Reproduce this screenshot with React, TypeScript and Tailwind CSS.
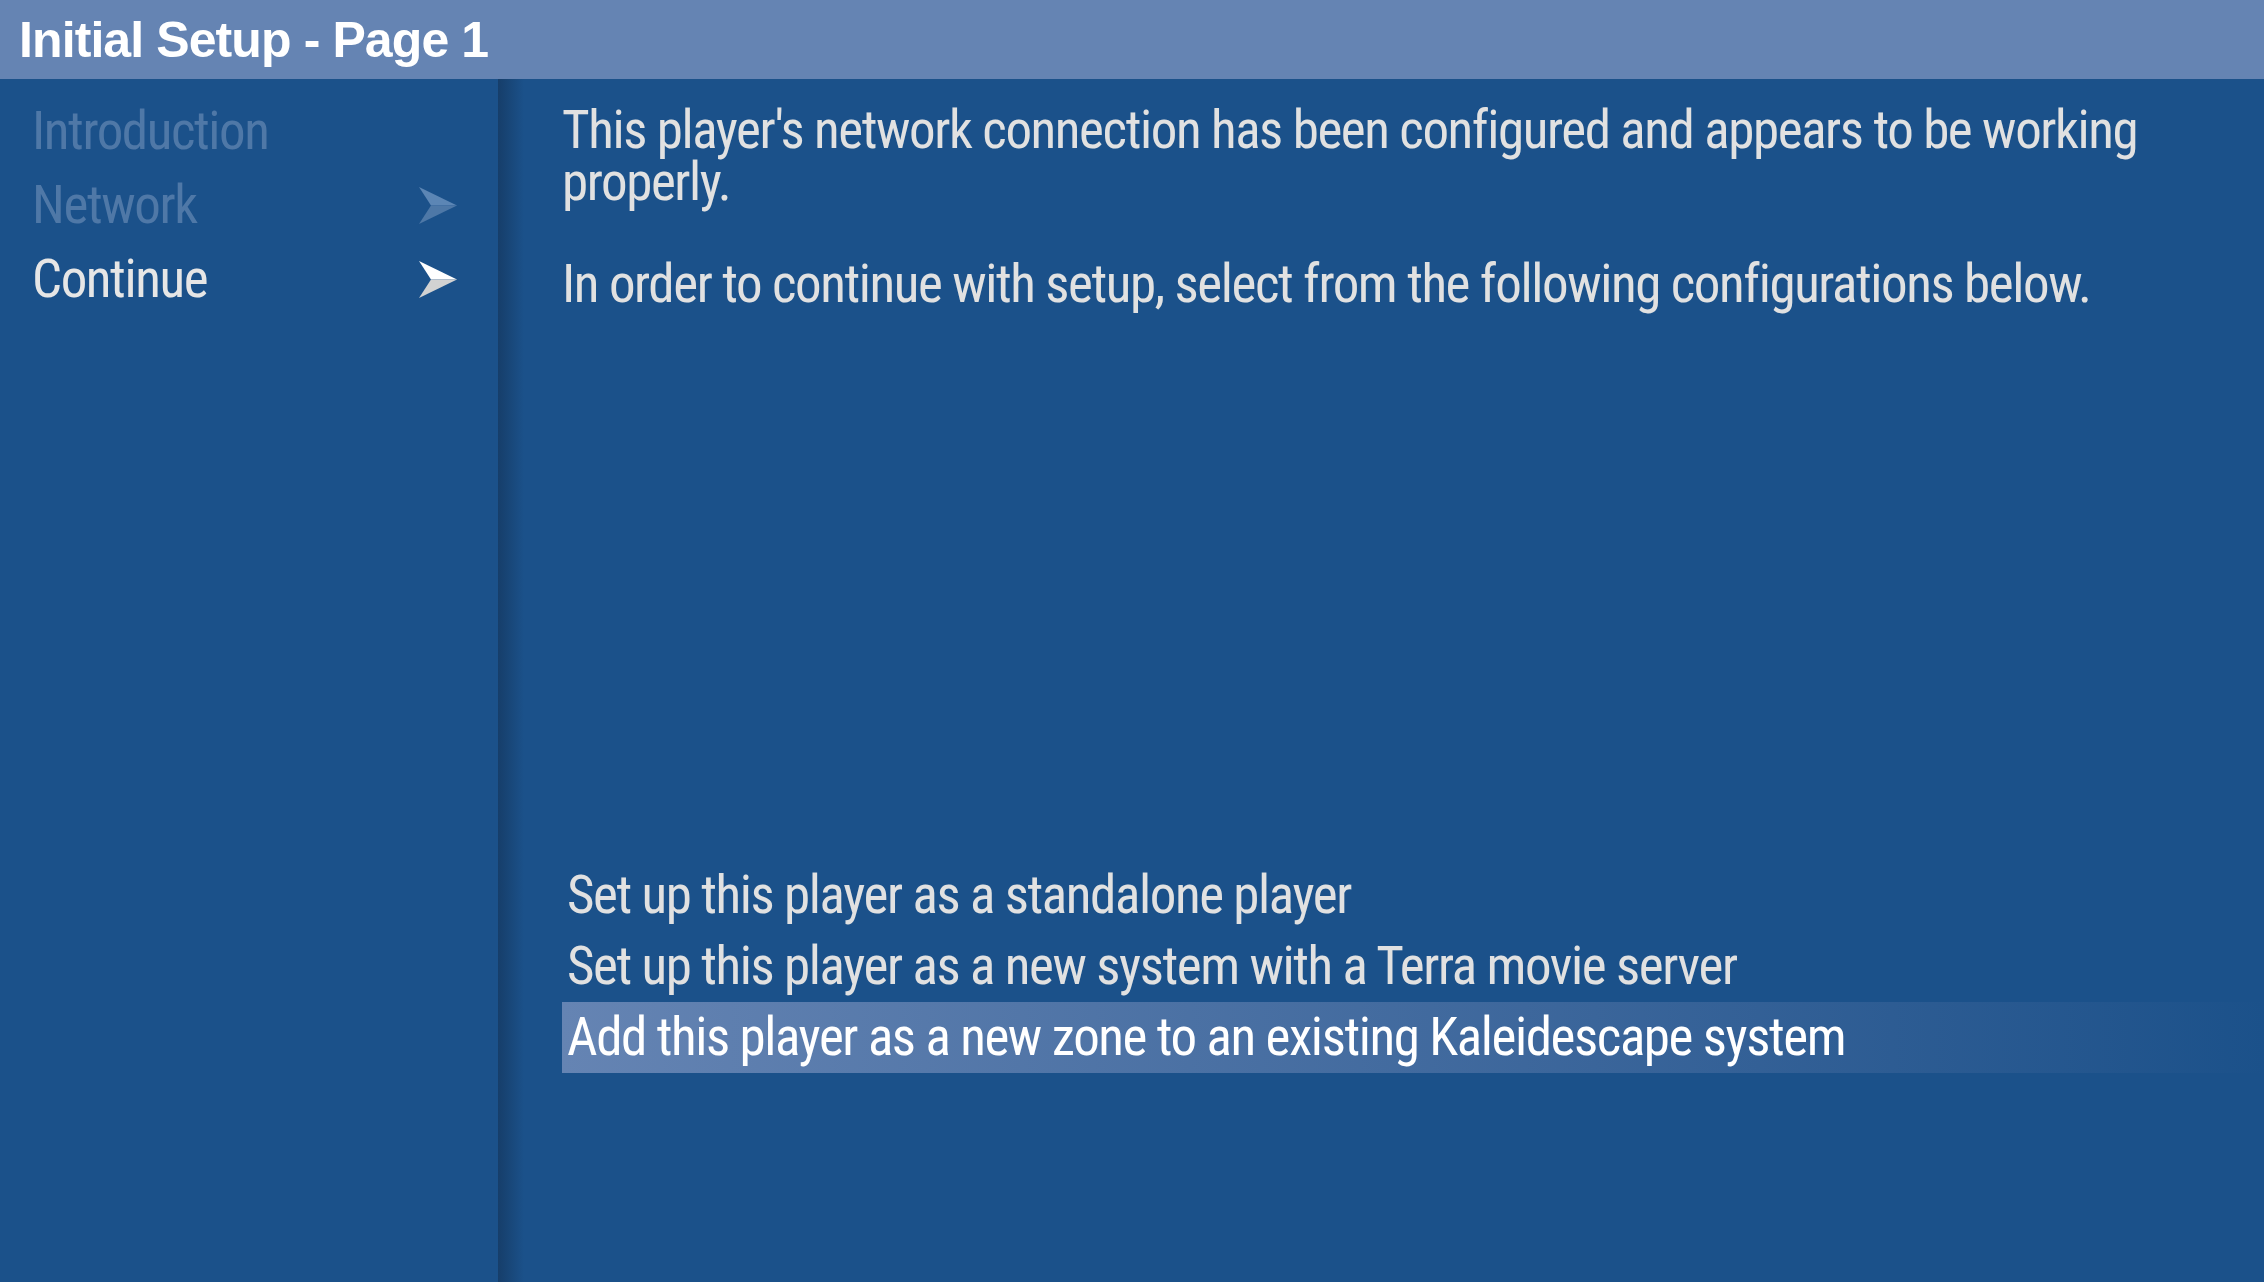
type ArrowProps = { top: string; bottom: string };

const Arrow = ({ top, bottom }: ArrowProps) => (
  <svg width="38" height="37" viewBox="0 0 38 37" className="shrink-0">
    <polygon points="0,0 38,18.5 12,18.5" fill={top} />
    <polygon points="12,18.5 38,18.5 0,37" fill={bottom} />
  </svg>
);

const navItems = [
  { label: "Introduction", dim: true, arrow: false },
  { label: "Network", dim: true, arrow: true },
  { label: "Continue", dim: false, arrow: true },
];

const options = [
  "Set up this player as a standalone player",
  "Set up this player as a new system with a Terra movie server",
  "Add this player as a new zone to an existing Kaleidescape system",
];

const selected = 2;

export default function App() {
  return (
    <div className="flex h-[1282px] w-[2264px] flex-col overflow-hidden bg-[#1b518a] font-['Roboto_Condensed','Liberation_Sans_Narrow',Roboto,sans-serif] font-stretch-[75%] tracking-[-1.4px]">
      <header className="h-[79px] shrink-0 bg-[#6584b3] pl-[19px] pt-[2px]">
        <h1 className="font-['Liberation_Sans',Arial,sans-serif] text-[50px] leading-[77px] font-bold tracking-[-0.9px] text-white font-stretch-normal">
          Initial Setup - Page 1
        </h1>
      </header>

      <div className="flex min-h-0 flex-1">
        <nav className="w-[498px] shrink-0 pt-[15px] pr-[41px] pl-[32px]">
          {navItems.map((item) => (
            <div key={item.label} className="flex h-[74px] items-center justify-between">
              <span
                className={`text-[53px] leading-[74px] ${item.dim ? "text-[#4f78a7]" : "text-[#e6e6e6]"}`}
              >
                {item.label}
              </span>
              {item.arrow &&
                (item.dim ? (
                  <Arrow top="#5c86b5" bottom="#4e78a7" />
                ) : (
                  <Arrow top="#ffffff" bottom="#d2d2d2" />
                ))}
            </div>
          ))}
        </nav>

        <div className="w-[26px] shrink-0 bg-gradient-to-r from-[#163e6a] to-[#1b518a]" />

        <main className="flex min-w-0 flex-1 flex-col pt-[25px]">
          <div className="pr-[60px] pl-[38px] text-[53px] leading-[52px] text-[#e1e1e1]">
            <p>
              This player's network connection has been configured and appears to be working properly.
            </p>
            <p className="mt-[50px]">
              In order to continue with setup, select from the following configurations below.
            </p>
          </div>

          <ul className="mt-auto mb-[209px] pl-[38px]">
            {options.map((opt, i) => (
              <li
                key={opt}
                className={`h-[71px] pl-[5px] text-[53px] leading-[71px] ${
                  i === selected
                    ? "bg-gradient-to-r from-[#6584b3] to-[#1b518a] text-white"
                    : "text-[#e1e1e1]"
                }`}
              >
                {opt}
              </li>
            ))}
          </ul>
        </main>
      </div>
    </div>
  );
}
